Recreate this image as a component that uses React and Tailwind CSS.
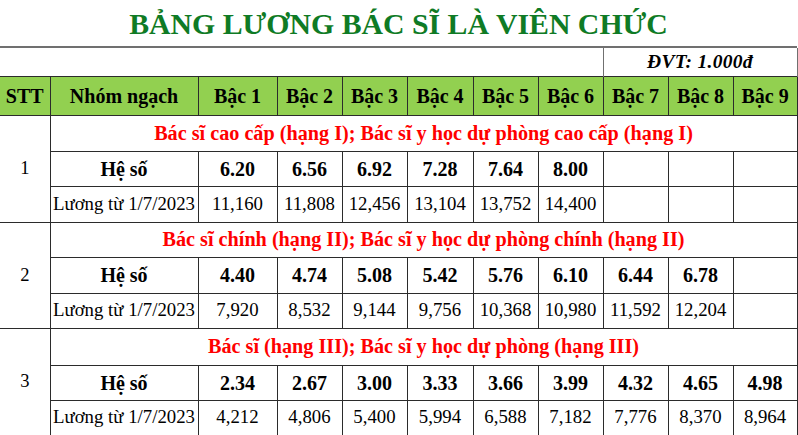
import React from "react";

const widths = [50, 148, 79, 65, 65, 66, 65, 65, 65, 65, 64];

const groups = [
  {
    stt: "1",
    title: "Bác sĩ cao cấp (hạng I); Bác sĩ y học dự phòng cao cấp (hạng I)",
    heso: ["6.20", "6.56", "6.92", "7.28", "7.64", "8.00", "", "", ""],
    luong: ["11,160", "11,808", "12,456", "13,104", "13,752", "14,400", "", "", ""],
    h: [36, 35, 36],
  },
  {
    stt: "2",
    title: "Bác sĩ chính (hạng II); Bác sĩ y học dự phòng chính (hạng II)",
    heso: ["4.40", "4.74", "5.08", "5.42", "5.76", "6.10", "6.44", "6.78", ""],
    luong: ["7,920", "8,532", "9,144", "9,756", "10,368", "10,980", "11,592", "12,204", ""],
    h: [35, 36, 35],
  },
  {
    stt: "3",
    title: "Bác sĩ (hạng III); Bác sĩ y học dự phòng (hạng III)",
    heso: ["2.34", "2.67", "3.00", "3.33", "3.66", "3.99", "4.32", "4.65", "4.98"],
    luong: ["4,212", "4,806", "5,400", "5,994", "6,588", "7,182", "7,776", "8,370", "8,964"],
    h: [37, 35, 35],
  },
];

const cell = "border border-[#2b2b2b] p-0 text-center align-middle";

export default function App() {
  return (
    <div
      className="w-[798px] h-[435px] overflow-hidden bg-white text-black"
      style={{ fontFamily: "'Liberation Serif', 'Times New Roman', serif" }}
    >
      <div className="h-[48px] w-[797px] border-b-2 border-[#707070] flex items-center justify-center">
        <h1 className="text-[29.8px] font-bold leading-none text-[#0f7b25] mt-[1px]">
          BẢNG LƯƠNG BÁC SĨ LÀ VIÊN CHỨC
        </h1>
      </div>
      <table className="table-fixed border-collapse w-[797px]">
        <colgroup>
          {widths.map((w, i) => (
            <col key={i} style={{ width: w }} />
          ))}
        </colgroup>
        <tbody>
          <tr className="h-[28px]">
            <td colSpan={8} className="p-0"></td>
            <td
              colSpan={3}
              className="p-0 text-center align-middle border-l border-r border-[#707070] text-[19.5px] tracking-[0.3px] font-bold italic leading-none"
            >
              ĐVT: 1.000đ
            </td>
          </tr>
          <tr className="h-[39px] bg-[#92d050] text-[20px] font-bold leading-none">
            <td className={cell + " border-l-0"}>STT</td>
            <td className={cell}>Nhóm ngạch</td>
            {[1, 2, 3, 4, 5, 6, 7, 8, 9].map((n) => (
              <td key={n} className={cell}>
                Bậc {n}
              </td>
            ))}
          </tr>
          {groups.map((g) => (
            <React.Fragment key={g.stt}>
              <tr style={{ height: g.h[0] }}>
                <td rowSpan={3} className={cell + " border-l-0 text-[18.5px] leading-none"}>
                  {g.stt}
                </td>
                <td
                  colSpan={10}
                  className={cell + " text-[20.2px] font-bold text-[#ff0000] leading-none"}
                >
                  {g.title}
                </td>
              </tr>
              <tr style={{ height: g.h[1] }} className="text-[20px] font-bold leading-none">
                <td className={cell}>Hệ số</td>
                {g.heso.map((v, i) => (
                  <td key={i} className={cell}>
                    {v}
                  </td>
                ))}
              </tr>
              <tr style={{ height: g.h[2] }} className="text-[18.8px] leading-none">
                <td className={cell + " whitespace-nowrap"}>Lương từ 1/7/2023</td>
                {g.luong.map((v, i) => (
                  <td key={i} className={cell}>
                    {v}
                  </td>
                ))}
              </tr>
            </React.Fragment>
          ))}
        </tbody>
      </table>
    </div>
  );
}
